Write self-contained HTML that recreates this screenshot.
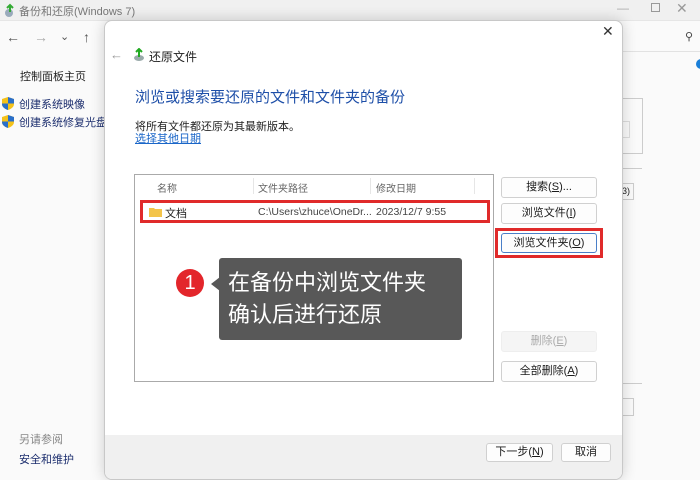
<!DOCTYPE html>
<html><head><meta charset="utf-8"><style>
*{margin:0;padding:0;box-sizing:border-box}
body{width:700px;height:468px;overflow:hidden;position:relative;background:#fafafa;font-family:"Liberation Sans","Noto Sans CJK SC",sans-serif;color:#222}
.a{position:absolute;white-space:nowrap}
.btn{position:absolute;background:#fdfdfd;border:1px solid #d0d0d0;border-radius:3px;font-size:11px;text-align:center;color:#1a1a1a}
</style></head><body>
<div class="a" style="left:0;top:0;width:700px;height:20px;background:#f0f0f0"></div>
<svg class="a" style="left:3px;top:3px" width="14" height="14"><circle cx="6" cy="10" r="4" fill="#9ab"/><path d="M7 2v7M4 5l3-3 3 3" stroke="#3a3" stroke-width="2" fill="none"/></svg>
<div class="a" style="left:19px;top:3px;font-size:11px;color:#777">备份和还原(Windows 7)</div>
<div class="a" style="left:617px;top:1px;font-size:12px;color:#aaa">—</div>
<div class="a" style="left:651px;top:3px;width:9px;height:9px;border:1px solid #999"></div>
<div class="a" style="left:676px;top:0px;font-size:14px;color:#999">✕</div>
<div class="a" style="left:0;top:20px;width:700px;height:1px;background:#e6e6e6"></div>
<div class="a" style="left:6px;top:29px;font-size:14px;color:#555">←</div>
<div class="a" style="left:34px;top:29px;font-size:14px;color:#aaa">→</div>
<div class="a" style="left:60px;top:30px;font-size:11px;color:#555">⌄</div>
<div class="a" style="left:83px;top:29px;font-size:14px;color:#555">↑</div>
<div class="a" style="left:622px;top:51px;width:78px;height:1px;background:#e2e2e2"></div>
<div class="a" style="left:685px;top:30px;font-size:11px;color:#444">⚲</div>
<div class="a" style="left:696px;top:59px;width:10px;height:10px;border-radius:5px;background:#1a7fd8"></div>
<div class="a" style="left:622px;top:98px;width:21px;height:56px;border:1px solid #ccc;border-left:none"></div>
<div class="a" style="left:622px;top:121px;width:8px;height:17px;border:1px solid #ddd;border-left:none"></div>
<div class="a" style="left:622px;top:168px;width:20px;height:1px;background:#ccc"></div>
<div class="a" style="left:622px;top:183px;width:12px;height:17px;border:1px solid #ccc;border-left:none;font-size:9px;line-height:15px">3)</div>
<div class="a" style="left:622px;top:383px;width:20px;height:1px;background:#ccc"></div>
<div class="a" style="left:622px;top:398px;width:12px;height:18px;border:1px solid #ccc;border-left:none"></div>
<div class="a" style="left:20px;top:68px;font-size:11px;color:#222">控制面板主页</div>
<svg class="a" style="left:2px;top:97px" width="12" height="13"><path d="M6 0L12 2V7C12 10 9 12 6 13 3 12 0 10 0 7V2Z" fill="#f4c21a"/><path d="M6 0L12 2V6.5H6ZM0 6.5H6V13C3 12 0 10 0 7Z" fill="#2a6fc9"/></svg>
<div class="a" style="left:19px;top:96px;font-size:11px;color:#1c2e6e">创建系统映像</div>
<svg class="a" style="left:2px;top:115px" width="12" height="13"><path d="M6 0L12 2V7C12 10 9 12 6 13 3 12 0 10 0 7V2Z" fill="#f4c21a"/><path d="M6 0L12 2V6.5H6ZM0 6.5H6V13C3 12 0 10 0 7Z" fill="#2a6fc9"/></svg>
<div class="a" style="left:19px;top:114px;font-size:11px;color:#1c2e6e">创建系统修复光盘</div>
<div class="a" style="left:19px;top:431px;font-size:11px;color:#888">另请参阅</div>
<div class="a" style="left:19px;top:451px;font-size:11px;color:#1c2e6e">安全和维护</div>
<div class="a" style="left:104px;top:20px;width:519px;height:460px;background:#fff;border:1px solid #c8c8c8;border-radius:8px;box-shadow:0 0 14px rgba(0,0,0,.18);overflow:hidden">
 <div class="a" style="left:0;top:414px;width:519px;height:50px;background:#f0f0f0"></div>
</div>
<div class="a" style="left:602px;top:23px;font-size:14px;color:#333">✕</div>
<div class="a" style="left:110px;top:47px;font-size:13px;color:#999">←</div>
<svg class="a" style="left:133px;top:48px" width="14" height="14"><ellipse cx="6" cy="10" rx="5" ry="3" fill="#9aa"/><path d="M6 1v8M3 4l3-3 3 3" stroke="#2a2" stroke-width="2" fill="none"/></svg>
<div class="a" style="left:149px;top:48px;font-size:12px;color:#222">还原文件</div>
<div class="a" style="left:135px;top:86px;font-size:15px;color:#1e4fa8">浏览或搜索要还原的文件和文件夹的备份</div>
<div class="a" style="left:135px;top:118px;font-size:11px;color:#222">将所有文件都还原为其最新版本。</div>
<div class="a" style="left:135px;top:130px;font-size:11px;color:#1a66c8;text-decoration:underline">选择其他日期</div>
<div class="a" style="left:134px;top:174px;width:360px;height:208px;border:1px solid #aaa;background:#fff"></div>
<div class="a" style="left:157px;top:180px;font-size:10px;color:#666">名称</div>
<div class="a" style="left:253px;top:178px;width:1px;height:16px;background:#e6e6e6"></div>
<div class="a" style="left:258px;top:180px;font-size:10px;color:#666">文件夹路径</div>
<div class="a" style="left:370px;top:178px;width:1px;height:16px;background:#e6e6e6"></div>
<div class="a" style="left:376px;top:180px;font-size:10px;color:#666">修改日期</div>
<div class="a" style="left:474px;top:178px;width:1px;height:16px;background:#e6e6e6"></div>
<div class="a" style="left:140px;top:200px;width:350px;height:23px;border:3px solid #e02a2a"></div>
<svg class="a" style="left:149px;top:207px" width="13" height="10"><path d="M0 1h5l1 1h7v8H0z" fill="#f3c44a"/></svg>
<div class="a" style="left:165px;top:205px;font-size:11px">文档</div>
<div class="a" style="left:258px;top:206px;font-size:10.5px;color:#444">C:\Users\zhuce\OneDr...</div>
<div class="a" style="left:376px;top:206px;font-size:10.5px;color:#444">2023/12/7 9:55</div>
<div class="btn" style="left:501px;top:177px;width:96px;height:21px;line-height:19px">搜索(<u>S</u>)...</div>
<div class="btn" style="left:501px;top:203px;width:96px;height:21px;line-height:19px">浏览文件(<u>I</u>)</div>
<div class="a" style="left:495px;top:228px;width:108px;height:30px;border:3px solid #e02a2a"></div>
<div class="btn" style="left:501px;top:233px;width:96px;height:20px;line-height:18px;border-color:#4a7fc8">浏览文件夹(<u>O</u>)</div>
<div class="btn" style="left:501px;top:331px;width:96px;height:21px;line-height:19px;color:#aaa;background:#f5f5f5;border-color:#eee">删除(<u>E</u>)</div>
<div class="btn" style="left:501px;top:361px;width:96px;height:21px;line-height:19px">全部删除(<u>A</u>)</div>
<div class="btn" style="left:486px;top:443px;width:67px;height:19px;line-height:17px">下一步(<u>N</u>)</div>
<div class="btn" style="left:561px;top:443px;width:50px;height:19px;line-height:17px">取消</div>
<div class="a" style="left:176px;top:269px;width:28px;height:28px;border-radius:14px;background:#e3262b;color:#fff;font-size:20px;line-height:28px;text-align:center">1</div>
<div class="a" style="left:211px;top:277px;width:0;height:0;border-top:7px solid transparent;border-bottom:7px solid transparent;border-right:9px solid #585858"></div>
<div class="a" style="left:219px;top:258px;width:243px;height:82px;background:#585858;border-radius:3px"></div>
<div class="a" style="left:228px;top:267px;font-size:22px;line-height:32px;color:#fff">在备份中浏览文件夹<br>确认后进行还原</div>
</body></html>
